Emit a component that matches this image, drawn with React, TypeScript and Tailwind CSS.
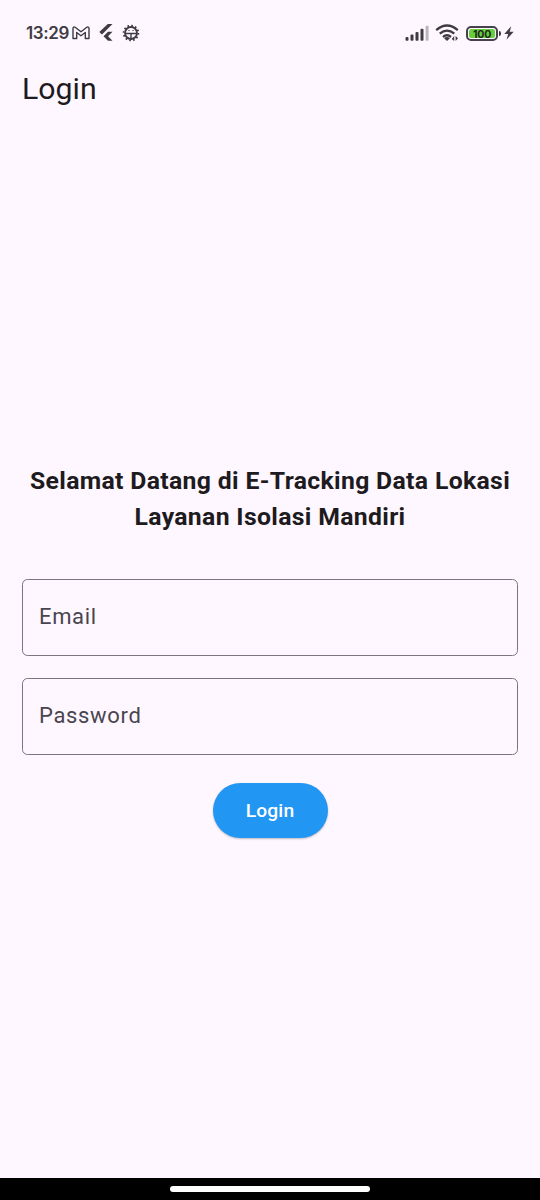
import React from "react";

function StatusBar() {
  return (
    <div className="flex h-[66px] items-center justify-between pl-[26px] pr-[26px] text-[#3f3b43]">
      <div className="flex items-center">
        <span className="w-[46px] whitespace-nowrap font-['Inter',sans-serif] text-[17px] font-semibold leading-5 tracking-[-0.4px]">13:29</span>
        <svg width="18" height="14" viewBox="0 0 18 14" fill="none" stroke="currentColor" strokeWidth="1.4" strokeLinejoin="round">
          <path d="M1 12.5V2.2C1 1 2.3.6 3.2 1.3L9 5.8l5.8-4.5C15.7.6 17 1 17 2.2V12.5H13.3V6.5L9 9.8 4.7 6.5v6Z" />
        </svg>
        <svg className="ml-[9px]" width="14" height="18" viewBox="0 0 14 18" fill="currentColor">
          <path d="M8.8 0H13.5L3 10.5.3 8Z" />
          <path d="M9 7.8H13.5L9.1 12.3 13.5 16.8H9L4.5 12.3Z" />
        </svg>
        <svg className="ml-[9px]" width="18" height="18" viewBox="0 0 18 18" fill="none" stroke="currentColor">
          <circle cx="9" cy="9" r="6" strokeWidth="1.8" />
          <circle cx="9" cy="9" r="7.4" strokeWidth="1.8" strokeDasharray="1.7 2.175" />
          <path d="M3 9.5H15M9 9.5v6" strokeWidth="1.4" />
          <path d="M6.4 6.5h1.2M10.4 6.5h1.2" strokeWidth="1.2" />
        </svg>
      </div>
      <div className="flex items-center">
        <svg width="25" height="16" viewBox="0 0 25 16" fill="currentColor">
          <rect x="0.5" y="12" width="3" height="3.7" rx="1" />
          <rect x="5.5" y="9.6" width="3" height="6.1" rx="1" />
          <rect x="10.5" y="6.9" width="3" height="8.8" rx="1" />
          <rect x="15.5" y="3.7" width="3" height="12" rx="1" />
          <rect x="20.6" y="0.7" width="3" height="15" rx="1" opacity="0.35" />
        </svg>
        <svg className="ml-[5px]" width="25" height="18" viewBox="0 0 25 18" fill="none" stroke="currentColor" strokeWidth="2.3">
          <path d="M1.2 6.1Q12-3 22.8 6.1M4.7 9.7Q12 3.6 19.3 9.7M8 13Q12 9.6 16 13" />
          <path d="M9.1 14.2Q12 12 14.9 14.2L12 17Z" fill="currentColor" stroke="none" />
          <path d="M19.2 12V17L16.8 14.9ZM20.6 12V17L23 14.2Z" fill="currentColor" stroke="none" />
        </svg>
        <div className="ml-[6px] flex h-[15px] w-[32px] rounded-[5px] border-2 border-[#46424b] p-px">
          <div className="flex flex-1 items-center justify-center rounded-[2.5px] bg-[#67cf3d] font-['Inter',sans-serif] text-[10.5px] font-bold tracking-[-0.2px] text-[#202a1c]">
            <span className="h-[11px] leading-[13px]">100</span>
          </div>
        </div>
        <div className="ml-px h-[5px] w-[2px] rounded-r bg-[#3f3b43]" />
        <svg className="ml-[3px]" width="10" height="14" viewBox="0 0 10 14" fill="currentColor">
          <path d="M7.2.3.3 7.9H4.2L2.5 13.7 9.7 5.7H5.7Z" />
        </svg>
      </div>
    </div>
  );
}

function Field({ label, type }: { label: string; type: string }) {
  return (
    <input
      type={type}
      placeholder={label}
      aria-label={label}
      className="block h-[77px] w-full rounded-[5.5px] border border-[#7a757f] bg-transparent px-4 pb-0.5 text-[22px] tracking-[0.66px] text-[#1d1b20] outline-none placeholder:text-[#49454f] placeholder:opacity-100"
    />
  );
}

export default function App() {
  return (
    <div className="flex h-[1200px] w-[540px] flex-col overflow-hidden bg-[#fef7ff] font-['Roboto',sans-serif] text-[#1d1b20]">
      <StatusBar />
      <header className="px-[22px] pt-1">
        <h1 className="text-[30.25px] leading-[38px]">Login</h1>
      </header>
      <main className="flex flex-1 flex-col px-[22px] pt-[355px]">
        <h2 className="text-center text-[24.75px] font-bold leading-9 tracking-[0.34px]">
          Selamat Datang di E-Tracking Data Lokasi
          <br />
          Layanan Isolasi Mandiri
        </h2>
        <form className="mt-11 flex flex-col gap-[22px]" onSubmit={(e) => e.preventDefault()}>
          <Field label="Email" type="email" />
          <Field label="Password" type="password" />
          <button
            type="submit"
            className="mt-[5.5px] h-[55px] w-[115px] self-center rounded-full bg-[#2196f3] pt-[2px] text-[19.25px] font-medium tracking-[0.14px] text-white shadow-[0_1px_2px_rgba(0,0,0,0.25)]"
          >
            Login
          </button>
        </form>
      </main>
      <div className="flex h-[22px] justify-center bg-black pt-[8px]">
        <div className="h-[6px] w-[200px] rounded-full bg-white" />
      </div>
    </div>
  );
}
